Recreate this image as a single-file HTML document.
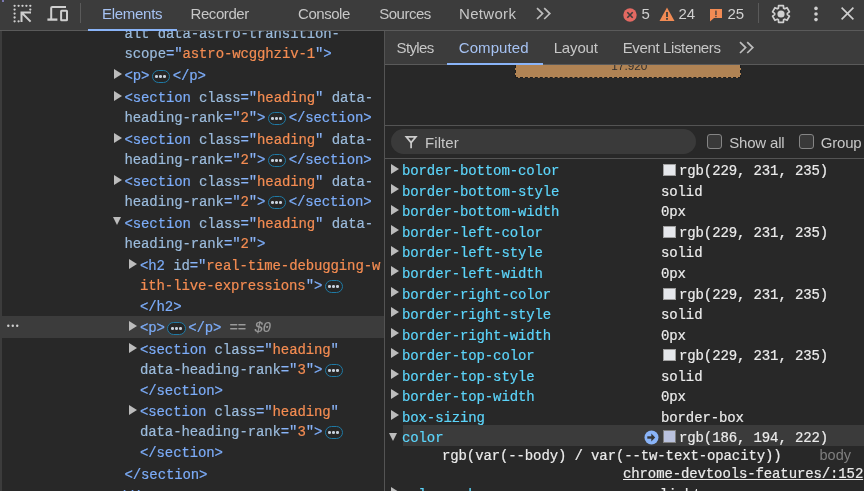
<!DOCTYPE html>
<html><head><meta charset="utf-8"><style>
*{margin:0;padding:0;box-sizing:border-box}
html,body{width:864px;height:491px;overflow:hidden;background:#282828}
body{position:relative;font-family:"Liberation Sans", sans-serif;}
#root{position:absolute;left:0;top:0;width:864px;height:491px;will-change:transform}
.abs{position:absolute}
.mono{font-family:"Liberation Mono", monospace;font-size:14px;letter-spacing:-0.12px;white-space:pre;position:absolute;line-height:20px;-webkit-text-stroke:0.2px currentColor}
.t{color:#7cacf8} .a{color:#9bbbdc} .v{color:#f48c52} .q{color:#8ab4f8}
.bd{display:inline-block;position:relative;width:18.3px;height:13px;border:1.3px solid #1f7aa5;border-radius:7px;background:#262626;vertical-align:-3px;margin:0 2.5px 0 2.5px}
.bd i{position:absolute;top:4px;width:2.6px;height:2.6px;border-radius:50%;background:#c6d0dc}
.bd i:nth-child(1){left:2.6px} .bd i:nth-child(2){left:6.6px} .bd i:nth-child(3){left:10.6px}
.tri{position:absolute;width:0;height:0;border-top:5.35px solid transparent;border-bottom:5.35px solid transparent;border-left:8.5px solid #bcbcbc}
.trid{position:absolute;width:0;height:0;border-left:4.5px solid transparent;border-right:4.5px solid transparent;border-top:8px solid #bcbcbc}
.tab{position:absolute;font-size:15px;color:#c7c7c7;white-space:pre;line-height:17px}
.sel{color:#a6c2f2}
.prop{color:#5cd5fb}
.val{color:#ebebeb}
.sw{display:inline-block;width:12px;height:12px;border:1px solid #9a9a9a;vertical-align:-1px;margin-right:4px}
</style></head><body><div id="root">

<div class="abs" style="left:0;top:0;width:864px;height:30px;background:#3c3c3c"></div>
<div class="abs" style="left:0;top:30px;width:864px;height:1px;background:#5a5a5a"></div>
<div class="abs" style="left:2px;top:0;width:1.5px;height:1.5px;background:#7a78b0"></div>
<div class="abs" style="left:0;top:31px;width:2px;height:460px;background:#3c3c3c"></div>
<svg class="abs" style="left:12px;top:3px" width="24" height="24" viewBox="0 0 24 24">
<g fill="#cfcfcf"><circle cx="2.6" cy="2.8" r="1.15"/><circle cx="6.6" cy="2.8" r="1.15"/><circle cx="10.5" cy="2.8" r="1.15"/><circle cx="14.4" cy="2.8" r="1.15"/><circle cx="18.3" cy="2.8" r="1.15"/><circle cx="2.6" cy="6.6" r="1.15"/><circle cx="2.6" cy="10.6" r="1.15"/><circle cx="2.6" cy="14.5" r="1.15"/><circle cx="2.6" cy="18.3" r="1.15"/><circle cx="6.6" cy="18.3" r="1.15"/><circle cx="18.3" cy="6.6" r="1.15"/></g>
<path d="M9.5 19 V9.5 H19 M9.5 9.5 L18.6 18.6" stroke="#cfcfcf" stroke-width="2" fill="none" stroke-linejoin="miter"/>
</svg>
<svg class="abs" style="left:44px;top:2px" width="28" height="24" viewBox="0 0 28 24">
<path d="M22 5 H8.3 Q7.2 5 7.2 6.1 V18" stroke="#cfcfcf" stroke-width="2" fill="none"/>
<path d="M3.4 17.6 H13.4" stroke="#cfcfcf" stroke-width="2.3" fill="none"/>
<rect x="17.1" y="8.8" width="5.9" height="9.5" rx="0.5" stroke="#cfcfcf" stroke-width="2" fill="none"/>
</svg>
<div class="abs" style="left:80px;top:3px;width:1px;height:20px;background:#5a5a5a"></div>
<div class="tab sel" style="left:102px;top:5.3px;letter-spacing:-0.286px;">Elements</div>
<div class="abs" style="left:88px;top:29px;width:89px;height:2px;background:#8ab4f8"></div>
<div class="tab" style="left:190.5px;top:5.3px;letter-spacing:-0.414px;">Recorder</div>
<div class="tab" style="left:298px;top:5.3px;letter-spacing:-0.45px;">Console</div>
<div class="tab" style="left:379.2px;top:5.3px;letter-spacing:-0.483px;">Sources</div>
<div class="tab" style="left:459px;top:5.3px;letter-spacing:0.317px;">Network</div>
<svg class="abs" style="left:535px;top:7px" width="18" height="14" viewBox="0 0 18 14"><path d="M2 1.2 L7.6 6.6 L2 12 M9.2 1.2 L14.8 6.6 L9.2 12" stroke="#bdbdbd" stroke-width="1.7" fill="none"/></svg>
<svg class="abs" style="left:622.5px;top:7.6px" width="14" height="14" viewBox="0 0 14 14"><circle cx="7" cy="7" r="6.7" fill="#e46962"/><path d="M4.3 4.3 L9.7 9.7 M9.7 4.3 L4.3 9.7" stroke="#3c3c3c" stroke-width="1.6"/></svg>
<div class="tab" style="left:641.5px;top:4.5px;color:#d0d0d0;font-size:15px">5</div>
<svg class="abs" style="left:658.5px;top:7px" width="16" height="15" viewBox="0 0 16 15"><path d="M8 0.5 L15.5 14 H0.5 Z" fill="#f28b54"/><rect x="7.1" y="5" width="1.8" height="5" fill="#3c3c3c"/><rect x="7.1" y="11" width="1.8" height="1.8" fill="#3c3c3c"/></svg>
<div class="tab" style="left:678.5px;top:4.5px;color:#d0d0d0;font-size:15px">24</div>
<svg class="abs" style="left:709px;top:8px" width="14" height="14" viewBox="0 0 14 14"><path d="M1 1 H13 V10 H5 L1 13.5 Z" fill="#f28b54"/><rect x="6.3" y="2.6" width="1.3" height="4.4" fill="#3c3c3c"/><rect x="6.3" y="7.8" width="1.3" height="1.4" fill="#3c3c3c"/></svg>
<div class="tab" style="left:727.5px;top:5px;color:#d0d0d0;font-size:15px">25</div>
<div class="abs" style="left:758px;top:3px;width:1px;height:20px;background:#5a5a5a"></div>
<svg class="abs" style="left:771.4px;top:3.5px" width="20" height="20" viewBox="0 0 20 20"><path d="M7.40 4.15 L7.60 1.64 L12.40 1.64 L12.60 4.15 L13.76 4.82 L16.04 3.74 L18.44 7.90 L16.36 9.33 L16.36 10.67 L18.44 12.10 L16.04 16.26 L13.76 15.18 L12.60 15.85 L12.40 18.36 L7.60 18.36 L7.40 15.85 L6.24 15.18 L3.96 16.26 L1.56 12.10 L3.64 10.67 L3.64 9.33 L1.56 7.90 L3.96 3.74 L6.24 4.82Z" stroke="#cfcfcf" stroke-width="1.7" fill="none" stroke-linejoin="round"/><circle cx="10" cy="10" r="3.6" fill="#cfcfcf"/></svg>
<svg class="abs" style="left:812.4px;top:3.5px" width="8" height="20" viewBox="0 0 8 20"><circle cx="4" cy="4.4" r="1.8" fill="#cfcfcf"/><circle cx="4" cy="10" r="1.8" fill="#cfcfcf"/><circle cx="4" cy="15.6" r="1.8" fill="#cfcfcf"/></svg>
<svg class="abs" style="left:841px;top:7px" width="13" height="13" viewBox="0 0 13 13"><path d="M0.6 0.6 L12.4 12.4 M12.4 0.6 L0.6 12.4" stroke="#cfcfcf" stroke-width="1.6"/></svg>
<div class="abs" style="left:2px;top:31px;width:382px;height:460px;overflow:hidden">
<div class="abs" style="left:0;top:285px;width:382px;height:22px;background:#3c3c3c"></div>
<div class="mono" style="left:122.5px;top:-6.73px"><span class="a">alt data-astro-transition-</span></div>
<div class="mono" style="left:122.5px;top:13.27px"><span class="a">scope</span><span class="q">="</span><span class="v">astro-wcgghziv-1</span><span class="q">"</span><span class="t">&gt;</span></div>
<div class="tri" style="left:112px;top:38px"></div>
<div class="mono" style="left:122.5px;top:35.27px"><span class="t">&lt;p&gt;</span><span class="bd"><i></i><i></i><i></i></span><span class="t">&lt;/p&gt;</span></div>
<div class="tri" style="left:112px;top:60px"></div>
<div class="mono" style="left:122.5px;top:57.27px"><span class="t">&lt;section</span> <span class="a">class</span><span class="q">="</span><span class="v">heading</span><span class="q">"</span> <span class="a">data-</span></div>
<div class="mono" style="left:122.5px;top:77.27px"><span class="a">heading-rank</span><span class="q">="</span><span class="v">2</span><span class="q">"</span><span class="t">&gt;</span><span class="bd"><i></i><i></i><i></i></span><span class="t">&lt;/section&gt;</span></div>
<div class="tri" style="left:112px;top:102px"></div>
<div class="mono" style="left:122.5px;top:99.27px"><span class="t">&lt;section</span> <span class="a">class</span><span class="q">="</span><span class="v">heading</span><span class="q">"</span> <span class="a">data-</span></div>
<div class="mono" style="left:122.5px;top:119.27px"><span class="a">heading-rank</span><span class="q">="</span><span class="v">2</span><span class="q">"</span><span class="t">&gt;</span><span class="bd"><i></i><i></i><i></i></span><span class="t">&lt;/section&gt;</span></div>
<div class="tri" style="left:112px;top:144px"></div>
<div class="mono" style="left:122.5px;top:141.27px"><span class="t">&lt;section</span> <span class="a">class</span><span class="q">="</span><span class="v">heading</span><span class="q">"</span> <span class="a">data-</span></div>
<div class="mono" style="left:122.5px;top:161.27px"><span class="a">heading-rank</span><span class="q">="</span><span class="v">2</span><span class="q">"</span><span class="t">&gt;</span><span class="bd"><i></i><i></i><i></i></span><span class="t">&lt;/section&gt;</span></div>
<div class="trid" style="left:111px;top:186px"></div>
<div class="mono" style="left:122.5px;top:183.27px"><span class="t">&lt;section</span> <span class="a">class</span><span class="q">="</span><span class="v">heading</span><span class="q">"</span> <span class="a">data-</span></div>
<div class="mono" style="left:122.5px;top:203.27px"><span class="a">heading-rank</span><span class="q">="</span><span class="v">2</span><span class="q">"</span><span class="t">&gt;</span></div>
<div class="tri" style="left:127px;top:228px"></div>
<div class="mono" style="left:138px;top:225.27px"><span class="t">&lt;h2</span> <span class="a">id</span><span class="q">="</span><span class="v">real-time-debugging-w</span></div>
<div class="mono" style="left:138px;top:245.27px"><span class="v">ith-live-expressions</span><span class="q">"</span><span class="t">&gt;</span><span class="bd"><i></i><i></i><i></i></span></div>
<div class="mono" style="left:138px;top:266.27px"><span class="t">&lt;/h2&gt;</span></div>
<svg class="abs" style="left:1.5px;top:291px" width="18" height="8" viewBox="0 0 18 8"><circle cx="4.3" cy="3.7" r="1.2" fill="#d0d0d0"/><circle cx="8.8" cy="3.7" r="1.2" fill="#d0d0d0"/><circle cx="13.2" cy="3.7" r="1.2" fill="#d0d0d0"/></svg>
<div class="tri" style="left:127px;top:290px"></div>
<div class="mono" style="left:138px;top:287.27px"><span class="t">&lt;p&gt;</span><span class="bd"><i></i><i></i><i></i></span><span class="t">&lt;/p&gt;</span><span style="color:#9a9a9a"> == <i>$0</i></span></div>
<div class="tri" style="left:127px;top:312px"></div>
<div class="mono" style="left:138px;top:309.27px"><span class="t">&lt;section</span> <span class="a">class</span><span class="q">="</span><span class="v">heading</span><span class="q">"</span></div>
<div class="mono" style="left:138px;top:329.27px"><span class="a">data-heading-rank</span><span class="q">="</span><span class="v">3</span><span class="q">"</span><span class="t">&gt;</span><span class="bd"><i></i><i></i><i></i></span></div>
<div class="mono" style="left:138px;top:350.27px"><span class="t">&lt;/section&gt;</span></div>
<div class="tri" style="left:127px;top:374px"></div>
<div class="mono" style="left:138px;top:371.27px"><span class="t">&lt;section</span> <span class="a">class</span><span class="q">="</span><span class="v">heading</span><span class="q">"</span></div>
<div class="mono" style="left:138px;top:391.27px"><span class="a">data-heading-rank</span><span class="q">="</span><span class="v">3</span><span class="q">"</span><span class="t">&gt;</span><span class="bd"><i></i><i></i><i></i></span></div>
<div class="mono" style="left:138px;top:412.27px"><span class="t">&lt;/section&gt;</span></div>
<div class="mono" style="left:122.5px;top:434.27px"><span class="t">&lt;/section&gt;</span></div>
<div class="mono" style="left:107.5px;top:456.27px"><span class="t">&lt;/div&gt;</span></div>
</div>
<div class="abs" style="left:384px;top:31px;width:1px;height:460px;background:#545454"></div>
<div class="abs" style="left:385px;top:31px;width:479px;height:33px;background:#3c3c3c"></div>
<div class="abs" style="left:385px;top:64px;width:479px;height:1px;background:#5a5a5a"></div>
<div class="tab" style="left:396.6px;top:39.1px;letter-spacing:-0.66px;">Styles</div>
<div class="tab sel" style="left:458.8px;top:39.1px;letter-spacing:0.071px;">Computed</div>
<div class="abs" style="left:447px;top:63px;width:95.5px;height:2px;background:#8ab4f8"></div>
<div class="tab" style="left:553.7px;top:39.1px;letter-spacing:-0.16px;">Layout</div>
<div class="tab" style="left:622.7px;top:39.1px;letter-spacing:-0.364px;">Event Listeners</div>
<svg class="abs" style="left:738px;top:41px" width="18" height="14" viewBox="0 0 18 14"><path d="M2 1.2 L7.6 6.6 L2 12 M9.2 1.2 L14.8 6.6 L9.2 12" stroke="#bdbdbd" stroke-width="1.7" fill="none"/></svg>
<div class="abs" style="left:515px;top:65px;width:226px;height:13px;background:#b08354;border:1px dashed #1e1e1e;border-top:none;overflow:hidden"><div style="position:absolute;left:95.3px;top:-6px;font-size:11.8px;color:#2e2e2e">17.920</div></div>
<div class="abs" style="left:385px;top:125px;width:479px;height:1px;background:#545454"></div>
<div class="abs" style="left:391px;top:129px;width:305px;height:25px;border-radius:12.5px;background:#3a3a3a"></div>
<svg class="abs" style="left:404px;top:135px" width="14" height="14" viewBox="0 0 14 14"><path d="M2.3 1.8 H11.9 L7.1 7.6 Z M7.1 7.6 V13.2" stroke="#cccccc" stroke-width="1.7" fill="none" stroke-linejoin="miter"/></svg>
<div class="tab" style="left:425px;top:134.3px;letter-spacing:0.08px;">Filter</div>
<div class="abs" style="left:707px;top:134px;width:15px;height:15px;border:1.5px solid #858585;border-radius:3px;background:#393939"></div>
<div class="tab" style="left:729.2px;top:134.3px;letter-spacing:-0.171px;">Show all</div>
<div class="abs" style="left:799px;top:134px;width:15px;height:15px;border:1.5px solid #858585;border-radius:3px;background:#393939"></div>
<div class="tab" style="left:820.8px;top:134.3px;letter-spacing:-0.2px;">Group</div>
<div class="abs" style="left:385px;top:158px;width:479px;height:1px;background:#545454"></div>
<div class="tri" style="left:391px;top:164px"></div>
<div class="mono prop" style="left:402px;top:161.27px">border-bottom-color</div>
<div class="abs" style="left:663px;top:164px;width:13px;height:12px;background:#e5e7eb;border:1px solid #a0a0a0"></div>
<div class="mono val" style="left:679px;top:161.27px">rgb(229, 231, 235)</div>
<div class="tri" style="left:391px;top:184px"></div>
<div class="mono prop" style="left:402px;top:181.81px">border-bottom-style</div>
<div class="mono val" style="left:661px;top:181.81px">solid</div>
<div class="tri" style="left:391px;top:205px"></div>
<div class="mono prop" style="left:402px;top:202.35px">border-bottom-width</div>
<div class="mono val" style="left:661px;top:202.35px">0px</div>
<div class="tri" style="left:391px;top:225px"></div>
<div class="mono prop" style="left:402px;top:222.89px">border-left-color</div>
<div class="abs" style="left:663px;top:226px;width:13px;height:12px;background:#e5e7eb;border:1px solid #a0a0a0"></div>
<div class="mono val" style="left:679px;top:222.89px">rgb(229, 231, 235)</div>
<div class="tri" style="left:391px;top:246px"></div>
<div class="mono prop" style="left:402px;top:243.43px">border-left-style</div>
<div class="mono val" style="left:661px;top:243.43px">solid</div>
<div class="tri" style="left:391px;top:266px"></div>
<div class="mono prop" style="left:402px;top:263.97px">border-left-width</div>
<div class="mono val" style="left:661px;top:263.97px">0px</div>
<div class="tri" style="left:391px;top:287px"></div>
<div class="mono prop" style="left:402px;top:284.51px">border-right-color</div>
<div class="abs" style="left:663px;top:288px;width:13px;height:12px;background:#e5e7eb;border:1px solid #a0a0a0"></div>
<div class="mono val" style="left:679px;top:284.51px">rgb(229, 231, 235)</div>
<div class="tri" style="left:391px;top:307px"></div>
<div class="mono prop" style="left:402px;top:305.05px">border-right-style</div>
<div class="mono val" style="left:661px;top:305.05px">solid</div>
<div class="tri" style="left:391px;top:328px"></div>
<div class="mono prop" style="left:402px;top:325.59px">border-right-width</div>
<div class="mono val" style="left:661px;top:325.59px">0px</div>
<div class="tri" style="left:391px;top:348px"></div>
<div class="mono prop" style="left:402px;top:346.13px">border-top-color</div>
<div class="abs" style="left:663px;top:349px;width:13px;height:12px;background:#e5e7eb;border:1px solid #a0a0a0"></div>
<div class="mono val" style="left:679px;top:346.13px">rgb(229, 231, 235)</div>
<div class="tri" style="left:391px;top:369px"></div>
<div class="mono prop" style="left:402px;top:366.67px">border-top-style</div>
<div class="mono val" style="left:661px;top:366.67px">solid</div>
<div class="tri" style="left:391px;top:389px"></div>
<div class="mono prop" style="left:402px;top:387.21px">border-top-width</div>
<div class="mono val" style="left:661px;top:387.21px">0px</div>
<div class="tri" style="left:391px;top:410px"></div>
<div class="mono prop" style="left:402px;top:407.75px">box-sizing</div>
<div class="mono val" style="left:661px;top:407.75px">border-box</div>
<div class="abs" style="left:403px;top:425px;width:461px;height:21px;background:#3b3b3b"></div>
<div class="trid" style="left:389px;top:433px"></div>
<div class="mono prop" style="left:402px;top:428.29px">color</div>
<svg class="abs" style="left:643.5px;top:429.5px" width="15" height="15" viewBox="0 0 15 15"><circle cx="7.5" cy="7.5" r="7" fill="#8ab4f8"/><rect x="3.3" y="6.3" width="4.6" height="2.4" fill="#353535"/><path d="M7.3 3.6 L11.2 7.5 L7.3 11.4 Z" fill="#353535"/></svg>
<div class="abs" style="left:663px;top:430px;width:13px;height:13px;background:#bac2de;border:1px solid #808080"></div>
<div class="mono val" style="left:679px;top:428.29px">rgb(186, 194, 222)</div>
<div class="mono val" style="left:442px;top:446px">rgb(var(--body) / var(--tw-text-opacity))</div>
<div class="abs" style="left:819.5px;top:447px;font-size:14.5px;color:#7f7f7f">body</div>
<div class="mono val" style="left:623px;top:464px;text-decoration:underline">chrome-devtools-features/:152</div>
<div class="tri" style="left:391px;top:486.5px"></div>
<div class="mono prop" style="left:402px;top:485px">color-scheme</div>
<div class="mono val" style="left:660px;top:485px">light</div>
</div></body></html>
